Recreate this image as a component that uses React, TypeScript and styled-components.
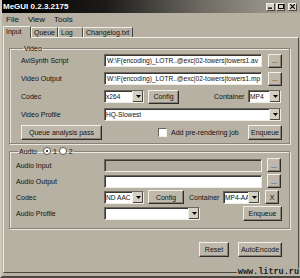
import styled, { createGlobalStyle } from "styled-components";

const Global = createGlobalStyle`
  html, body { margin: 0; padding: 0; background: #b6b1a3; }
  body { font-family: "Liberation Sans", Arial, sans-serif; font-size: 7px; color: #111; }
`;

const Window = styled.div`
  position: relative;
  width: 300px;
  height: 278px;
  background: #b6b1a3;
  display: flex;
  flex-direction: column;
  overflow: hidden;
  box-sizing: border-box;
  border-left: 2px solid #cdc9bc;
  border-bottom: 2px solid #4a4740;
`;

const TitleBar = styled.div`
  height: 13px;
  margin-left: -2px;
  background: linear-gradient(90deg, #000 0%, #1c1b19 35%, #6f6c64 68%, #aaa69b 100%);
  display: flex;
  align-items: center;
  padding: 0 3px;
`;

const Title = styled.span`
  color: #fff;
  font-weight: bold;
  font-size: 8px;
  flex: 1;
`;

const WinButtons = styled.div`
  display: flex;
  gap: 1px;
`;

const WinBtn = styled.div<{ $gap?: boolean }>`
  width: 9px;
  height: 8px;
  margin-left: ${(p) => (p.$gap ? "2px" : "0")};
  background: #d6d2c6;
  border: 1px solid;
  border-color: #f2efe6 #4a4740 #4a4740 #f2efe6;
  box-sizing: border-box;
  display: flex;
  align-items: center;
  justify-content: center;
`;

const MenuBar = styled.div`
  height: 12px;
  display: flex;
  align-items: center;
  gap: 9px;
  padding-left: 4px;
  font-size: 8px;
`;

const TabStrip = styled.div`
  height: 12px;
  display: flex;
  align-items: flex-end;
  padding-left: 1px;
`;

const Tab = styled.div<{ $active?: boolean; $w: number }>`
  width: ${(p) => p.$w}px;
  height: ${(p) => (p.$active ? 12 : 10)}px;
  box-sizing: border-box;
  border: 1px solid;
  border-bottom: none;
  border-color: #f0ede4 #4a4740 #4a4740 #f0ede4;
  padding-left: 2px;
  font-size: 7px;
  line-height: 9px;
  white-space: nowrap;
  background: #b6b1a3;
  margin-bottom: ${(p) => (p.$active ? "-1px" : "0")};
  position: relative;
  z-index: ${(p) => (p.$active ? 1 : 0)};
`;

const Panel = styled.div`
  flex: 1;
  margin: 0 1px 3px 1px;
  border: 1px solid;
  border-color: #f0ede4 #4a4740 #4a4740 #f0ede4;
  padding: 7px 8px 0 5px;
  display: flex;
  flex-direction: column;
`;

const Group = styled.fieldset<{ $pl: number; $pt: number; $pb: number; $gap: number }>`
  margin: 0;
  padding: ${(p) => p.$pt}px 6px ${(p) => p.$pb}px ${(p) => p.$pl}px;
  border: 1px solid #86827a;
  box-shadow: 1px 1px 0 #ebe8df, inset 1px 1px 0 #ebe8df;
  display: flex;
  flex-direction: column;
  gap: ${(p) => p.$gap}px;
  & + & {
    margin-top: 3px;
  }
`;

const Legend = styled.legend`
  padding: 0 1px;
  margin-left: 2px;
  font-size: 7px;
  display: flex;
  align-items: center;
  gap: 2px;
`;

const Row = styled.div<{ $h?: number }>`
  height: ${(p) => p.$h ?? 15}px;
  display: flex;
  align-items: center;
`;

const Label = styled.span<{ $w: number; $ml?: number }>`
  width: ${(p) => p.$w}px;
  margin-left: ${(p) => p.$ml ?? 0}px;
  flex-shrink: 0;
  font-size: 7px;
  white-space: nowrap;
`;

const TextBox = styled.div<{ $w: number; $disabled?: boolean }>`
  width: ${(p) => p.$w}px;
  height: 13px;
  box-sizing: border-box;
  border: 1px solid;
  border-color: #6a665e #f0ede4 #f0ede4 #6a665e;
  box-shadow: inset 1px 1px 0 #3a3833;
  background: ${(p) => (p.$disabled ? "#b1ac9e" : "#fff")};
  font-size: 6.6px;
  line-height: 11px;
  padding-left: 2px;
  white-space: nowrap;
  overflow: hidden;
`;

const Select = styled(TextBox)`
  display: flex;
  padding-left: 1px;
  padding-right: 0;
`;

const SelectText = styled.span`
  flex: 1;
  overflow: hidden;
  white-space: nowrap;
`;

const Arrow = styled.div`
  width: 10px;
  height: 100%;
  background: #d3cfc3;
  border-left: 1px solid #f0ede4;
  box-shadow: inset -1px -1px 0 #4a4740;
  display: flex;
  align-items: center;
  justify-content: center;
  flex-shrink: 0;
`;

const Button = styled.div<{ $w: number; $h?: number; $ml?: number; $mr?: number }>`
  width: ${(p) => p.$w}px;
  height: ${(p) => p.$h ?? 14}px;
  margin-left: ${(p) => p.$ml ?? 0}px;
  margin-right: ${(p) => p.$mr ?? 0}px;
  box-sizing: border-box;
  border: 1px solid;
  border-color: #f2efe6 #2e2c28 #2e2c28 #f2efe6;
  box-shadow: inset -1px -1px 0 #86827a;
  background: #bdb8ab;
  display: flex;
  align-items: center;
  justify-content: center;
  font-size: 7px;
  white-space: nowrap;
  flex-shrink: 0;
`;

const Spacer = styled.div`
  flex: 1;
`;

const Check = styled.div`
  width: 7px;
  height: 7px;
  background: #fff;
  border: 1px solid;
  border-color: #6a665e #f0ede4 #f0ede4 #6a665e;
  margin: 0 4px 0 56px;
`;

const Radio = styled.span<{ $on?: boolean }>`
  width: 6px;
  height: 6px;
  border-radius: 50%;
  background: #fff;
  border: 1px solid #5a5750;
  display: inline-flex;
  align-items: center;
  justify-content: center;
  &::after {
    content: "";
    width: 2px;
    height: 2px;
    border-radius: 50%;
    background: ${(p) => (p.$on ? "#000" : "transparent")};
  }
`;

const Footer = styled.div`
  display: flex;
  justify-content: flex-end;
  gap: 9px;
  padding-right: 8px;
  margin-top: 13px;
`;

const Watermark = styled.div`
  position: absolute;
  right: 1px;
  bottom: -1px;
  font-family: "Liberation Mono", "DejaVu Sans Mono", monospace;
  font-weight: bold;
  font-size: 8.5px;
  color: #1a1a1a;
  background: #b6b1a3;
  line-height: 9px;
  padding-left: 1px;
`;

const DownArrow = () => (
  <svg width="5" height="3" viewBox="0 0 5 3">
    <path d="M0 0h5L2.5 3z" fill="#000" />
  </svg>
);

const Combo = ({ w, text }: { w: number; text: string }) => (
  <Select $w={w}>
    <SelectText>{text}</SelectText>
    <Arrow>
      <DownArrow />
    </Arrow>
  </Select>
);

export default function App() {
  return (
    <>
      <Global />
      <Window>
        <TitleBar>
          <Title>MeGUI 0.2.3.2175</Title>
          <WinButtons>
            <WinBtn>
              <svg width="5" height="5" viewBox="0 0 5 5">
                <rect x="0" y="3.5" width="4" height="1.3" fill="#000" />
              </svg>
            </WinBtn>
            <WinBtn>
              <svg width="6" height="5" viewBox="0 0 6 5">
                <rect x="0.5" y="0.5" width="5" height="4" fill="none" stroke="#000" strokeWidth="1" />
              </svg>
            </WinBtn>
            <WinBtn $gap>
              <svg width="5" height="5" viewBox="0 0 5 5">
                <path d="M0 0L5 5M5 0L0 5" stroke="#000" strokeWidth="1.2" />
              </svg>
            </WinBtn>
          </WinButtons>
        </TitleBar>
        <MenuBar>
          <span>File</span>
          <span>View</span>
          <span>Tools</span>
        </MenuBar>
        <TabStrip>
          <Tab $active $w={28}>Input</Tab>
          <Tab $w={27}>Queue</Tab>
          <Tab $w={25}>Log</Tab>
          <Tab $w={50}>Changelog.txt</Tab>
        </TabStrip>
        <Panel>
          <Group $pl={11} $pt={1} $pb={3} $gap={3}>
            <Legend>Video</Legend>
            <Row>
              <Label $w={83}>AviSynth Script</Label>
              <TextBox $w={158}>W:\F(encoding)_LOTR..@exc|02-towers|towers1.av</TextBox>
              <Button $w={14} $ml={6}>...</Button>
            </Row>
            <Row>
              <Label $w={83}>Video Output</Label>
              <TextBox $w={158}>W:\F(encoding)_LOTR..@exc|02-towers|towers1.mp</TextBox>
              <Button $w={14} $ml={6}>...</Button>
            </Row>
            <Row>
              <Label $w={83}>Codec</Label>
              <Combo w={40} text="x264" />
              <Button $w={31} $ml={4}>Config</Button>
              <Label $w={34} $ml={35}>Container</Label>
              <Combo w={33} text="MP4" />
            </Row>
            <Row $h={14}>
              <Label $w={83}>Video Profile</Label>
              <Combo w={177} text="HQ-Slowest" />
            </Row>
            <Row $h={16}>
              <Button $w={81} $h={15}>Queue analysis pass</Button>
              <Check />
              <span>Add pre-rendering job</span>
              <Spacer />
              <Button $w={34} $h={15} $mr={1}>Enqueue</Button>
            </Row>
          </Group>
          <Group $pl={6} $pt={3} $pb={7} $gap={2}>
            <Legend>
              Audio <span style={{ width: 2 }} />
              <Radio $on /> 1 <Radio /> 2
            </Legend>
            <Row $h={14}>
              <Label $w={88}>Audio Input</Label>
              <TextBox $w={158} $disabled />
              <Button $w={14} $ml={5}>...</Button>
            </Row>
            <Row $h={14}>
              <Label $w={88}>Audio Output</Label>
              <TextBox $w={158} />
              <Button $w={14} $ml={5}>...</Button>
            </Row>
            <Row $h={14}>
              <Label $w={88}>Codec</Label>
              <Combo w={40} text="ND AAC" />
              <Button $w={36} $ml={4}>Config</Button>
              <Label $w={34} $ml={5}>Container</Label>
              <Combo w={37} text="MP4-AA" />
              <Button $w={14} $ml={5}>X</Button>
            </Row>
            <Row $h={15}>
              <Label $w={88}>Audio Profile</Label>
              <Combo w={96} text="" />
              <Spacer />
              <Button $w={39} $h={15} $mr={1}>Enqueue</Button>
            </Row>
          </Group>
          <Footer>
            <Button $w={30} $h={15}>Reset</Button>
            <Button $w={44} $h={15}>AutoEncode</Button>
          </Footer>
        </Panel>
        <Watermark>www.litru.ru</Watermark>
      </Window>
    </>
  );
}
